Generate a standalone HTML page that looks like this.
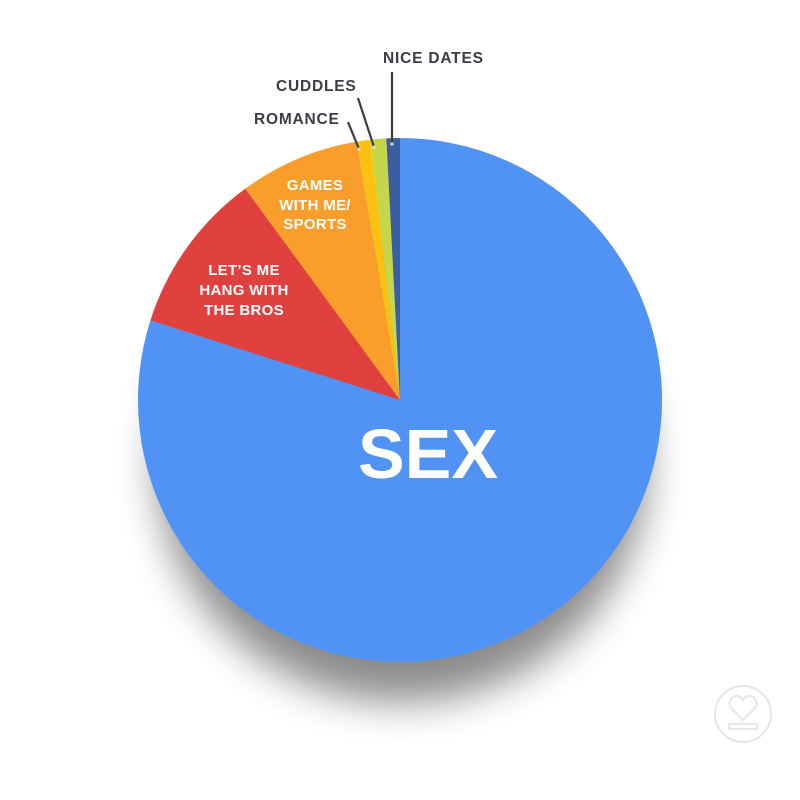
<!DOCTYPE html>
<html><head><meta charset="utf-8"><style>
html,body{margin:0;padding:0;background:#fff;width:800px;height:800px;overflow:hidden}
svg{display:block}
text{font-family:"Liberation Sans",sans-serif;font-weight:bold}
</style></head><body>
<svg width="800" height="800" viewBox="0 0 800 800">
<defs>
<filter id="b" x="-50%" y="-50%" width="200%" height="200%"><feGaussianBlur stdDeviation="20"/></filter>
</defs>
<ellipse cx="402" cy="462" rx="245" ry="240" fill="#000" opacity="0.45" filter="url(#b)"/>
<path d="M400 400 L400 138 A262 262 0 1 1 150.4 320.4 Z" fill="#5192f5"/>
<path d="M400 400 L150.4 320.4 A262 262 0 0 1 245.3 188.6 Z" fill="#e0403e"/>
<path d="M400 400 L245.3 188.6 A262 262 0 0 1 356.8 141.6 Z" fill="#f99e2a"/>
<path d="M400 400 L356.8 141.6 A262 262 0 0 1 370.3 139.7 Z" fill="#fcc10e"/>
<path d="M400 400 L370.3 139.7 A262 262 0 0 1 386.3 138.4 Z" fill="#c5d64a"/>
<path d="M400 400 L386.3 138.4 A262 262 0 0 1 400 138 Z" fill="#3b5ea0"/>
<g stroke="#3a3d45" stroke-width="2.2" fill="none">
<line x1="348" y1="122" x2="359" y2="149"/>
<line x1="358" y1="98" x2="374" y2="147"/>
<line x1="392" y1="72" x2="392" y2="144"/>
</g>
<circle cx="359" cy="149" r="1.6" fill="#fff" opacity=".7"/>
<circle cx="374" cy="147" r="1.6" fill="#fff" opacity=".7"/>
<circle cx="392" cy="144" r="1.8" fill="#fff" opacity=".7"/>
<g fill="#3a3d45" font-size="15.5" letter-spacing="0.8">
<text x="383" y="63">NICE DATES</text>
<text x="276" y="91">CUDDLES</text>
<text x="254" y="124">ROMANCE</text>
</g>
<g fill="#fff" font-size="15" text-anchor="middle" letter-spacing="0.3">
<text x="315" y="190">GAMES</text>
<text x="315" y="210">WITH ME/</text>
<text x="315" y="229">SPORTS</text>
<text x="244" y="275">LET’S ME</text>
<text x="244" y="295">HANG WITH</text>
<text x="244" y="315">THE BROS</text>
</g>
<text x="428" y="478" fill="#fff" font-size="70" text-anchor="middle">SEX</text>
<g stroke="#e6e6e6" stroke-width="2" fill="none">
<circle cx="743" cy="714" r="28"/>
<path d="M743 720 L732 709 C727 704 730 696 737 696 C740 696 742 698 743 700 C744 698 746 696 749 696 C756 696 759 704 754 709 Z"/>
<rect x="729" y="724" width="28" height="5"/>
</g>
</svg>
</body></html>
